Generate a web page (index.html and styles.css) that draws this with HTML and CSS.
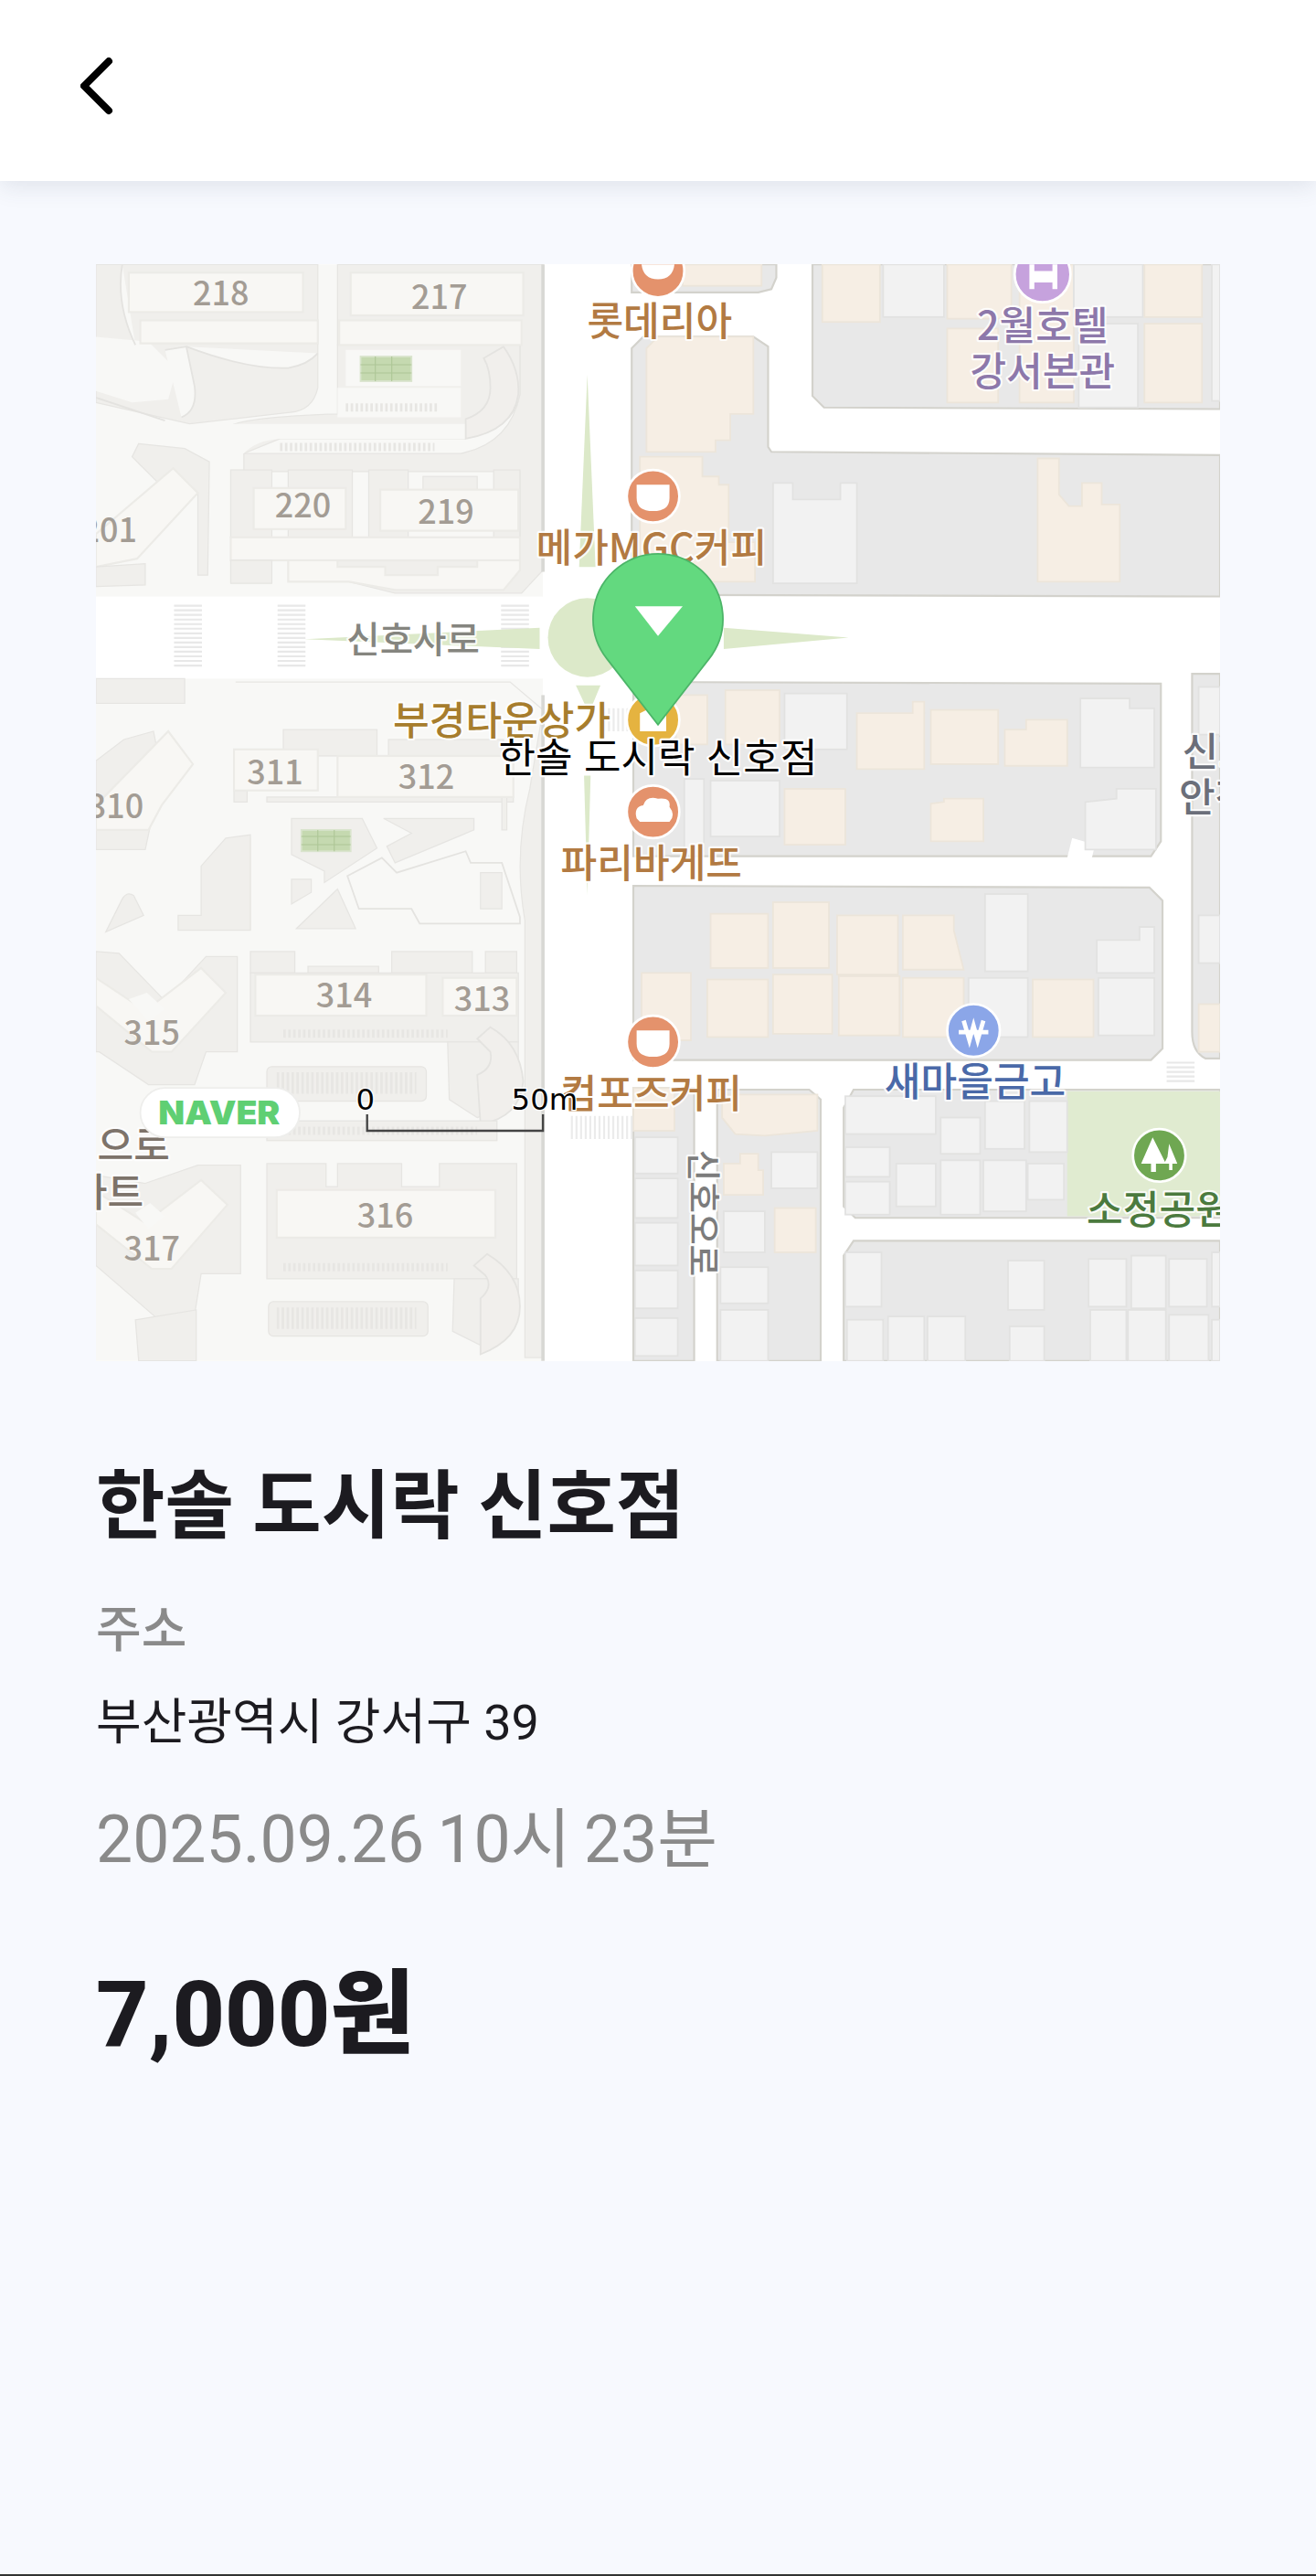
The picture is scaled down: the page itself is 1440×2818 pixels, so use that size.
FILE: index.html
```html
<!DOCTYPE html>
<html lang="ko">

<head>
    <meta charset="UTF-8">
    <meta name="viewport" content="width=device-width, initial-scale=1.0">
    <title>한솔 도시락 신호점</title>
    <link rel="stylesheet" href="styles.css">
</head>

<body>
    <div class="page">
        <header class="top">
            <svg class="back" viewBox="0 0 40 70" width="40" height="70">
                <path d="M31 8 L4 35 L31 62"></path>
            </svg>
        </header>
        <main class="content">
            <div class="map">
                <svg viewBox="58 161 684 667" width="1230" height="1200">
                    <!-- ground -->
                    <rect class="ground" x="58" y="161" width="272" height="667"></rect>
                    <rect class="road" x="58" y="363" width="684" height="50"></rect>

                    <!-- upper left complex -->
                    <path class="shade" d="M58 161H193V236Q190 250 176 251L115 258L58 245Z"></path>
                    <path class="ground" d="M58 205L90 208L107 225L102 243L80 245L58 238Z"></path>
                    <path class="walk" d="M100 213L113 211L118 235Q120 250 110 254M113 211Q150 225 175 224Q187 222 193 215M74 161Q70 185 82 210M58 242L100 256"></path>
                    <rect class="apt" x="78" y="166" width="106" height="24"></rect>
                    <rect class="apt" x="85" y="195" width="108" height="14"></rect>
                    <path class="shade" d="M205 161H330V347L317 361H240L212 354H175V341H205V327H316V287H148V276H280Q310 270 316 240V210H205Z"></path>
                    <path class="shade" d="M205 210H316V240Q312 262 282 267H170L148 276L135 262Q140 254 205 252Z"></path>
                    <path class="ground" d="M210 213H280V235H210Z"></path>
                    <path class="ground" d="M130 258H283V267H170Q155 268 148 276H130Z"></path>
                    <path class="ground" d="M205 236H280V254H205Z"></path>
                    <path class="stripe" d="M210 248H267M170 272H264"></path>
                    <path class="curve" d="M283 255Q298 250 298 236Q298 225 294 218L306 211Q316 225 315 240Q312 262 283 267Z"></path>
                    <rect class="court" x="219" y="217" width="31" height="15"></rect>
                    <path class="courtline" d="M219 222H250M219 227H250M228 217V232M238 217V232"></path>
                    <rect class="apt" x="213" y="166" width="105" height="26"></rect>
                    <rect class="apt" x="206" y="195" width="111" height="15"></rect>
                    <rect class="shade" x="140" y="286" width="25" height="41"></rect>
                    <rect class="shade" x="175" y="286" width="39" height="41"></rect>
                    <rect class="shade" x="224" y="286" width="24" height="41"></rect>
                    <rect class="shade" x="257" y="290" width="33" height="10"></rect>
                    <rect class="shade" x="300" y="286" width="16" height="41"></rect>
                    <rect class="apt" x="154" y="297" width="56" height="25"></rect>
                    <rect class="apt" x="231" y="298" width="84" height="25"></rect>
                    <rect class="apt" x="140" y="327" width="176" height="14"></rect>
                    <path class="apt" d="M175 341H205V345H234V350H266V345H290V341H316V347L306 359H240L212 354H175Z"></path>
                    <rect class="shade" x="140" y="341" width="25" height="14"></rect>
                    <path class="shade" d="M84 270L112 273L127 281L126 350H120V300L105 285L96 294L80 278Z"></path>
                    <path class="apt" d="M105 285L120 300L83 340L58 345V325Z"></path>
                    <path class="shade" d="M58 345L88 343V356L58 357Z"></path>

                    <!-- lower left complex -->
                    <path class="shade" d="M58 413H112V428H58Z"></path>
                    <path class="shade" d="M143 415H310L330 432V826H319V560Q312 520 322 480L330 432L310 415Z"></path>
                    <rect class="shade" x="172" y="444" width="57" height="16"></rect>
                    <rect class="shade" x="236" y="450" width="70" height="10"></rect>
                    <rect class="shade" x="142" y="481" width="8" height="7"></rect>
                    <rect class="shade" x="162" y="485" width="150" height="3"></rect>
                    <rect class="shade" x="305" y="485" width="3" height="20"></rect>
                    <rect class="apt" x="142" y="456" width="51" height="25"></rect>
                    <rect class="apt" x="205" y="460" width="107" height="25"></rect>
                    <path class="shade" d="M58 463L75 450L93 445L98 470L88 517H58Z"></path>
                    <path class="apt" d="M58 490L102 445L117 465L98 490L90 505H58Z"></path>
                    <path class="shade" d="M137 510L152 508V566H108V557H122V527Z"></path>
                    <path class="shade" d="M177 498H220L229 516L197 537V530L177 520Z"></path>
                    <path class="shade" d="M233 498H288V505L240 525L235 515L250 507Z"></path>
                    <rect class="court" x="183" y="505" width="30" height="13"></rect>
                    <path class="courtline" d="M183 509H213M183 514H213M193 505V518M203 505V518"></path>
                    <path class="shade" d="M177 535H189V543L177 550Z"></path>
                    <path class="shade" d="M180 565L205 541L216 565Z"></path>
                    <path class="shade" d="M64 567L74 547Q77 542 81 545L87 557Z"></path>
                    <path class="walk" d="M211 533L232 522L241 531L283 518L286 525H305L316 558V562H255L250 553H218Z"></path>
                    <rect class="shade" x="292" y="531" width="13" height="22"></rect>
                    <path class="shade" d="M152 579H179V592H152ZM238 579H287V592H238ZM295 579H314V592H295ZM187 588H230V592H187Z"></path>
                    <rect class="shade" x="152" y="592" width="163" height="42"></rect>
                    <rect class="apt" x="155" y="593" width="104" height="25"></rect>
                    <rect class="apt" x="269" y="595" width="45" height="23"></rect>
                    <path class="stripe" d="M172 629H272"></path>
                    <path class="shade" d="M272 634H315V660Q313 672 290 680L273 669Z"></path>
                    <path class="curve" d="M290 654Q300 650 298 640L290 632L298 625Q316 635 318 658Q316 680 292 684Z"></path>
                    <rect class="shade" x="162" y="649" width="97" height="21" rx="3"></rect>
                    <path class="stripe tall" d="M168 659H253"></path>
                    <rect class="shade" x="162" y="682" width="140" height="12"></rect>
                    <path class="stripe" d="M172 688H290"></path>
                    <path class="shade" d="M58 579L72 580L100 609L125 582H144V640H125L118 660H90L60 640H58Z"></path>
                    <path class="apt" d="M88 615L122 589L137 604L104 640H92L58 612V595Z"></path>
                    <path class="ground" d="M78 608L89 604L100 614L90 622Z"></path>
                    <path class="shade" d="M88 720L120 709H146V775H122L118 800L95 802L58 770V715Z"></path>
                    <path class="apt" d="M88 744L122 718L138 733L104 772H92L58 745V725Z"></path>
                    <path class="ground" d="M82 738L91 732L100 740L90 748Z"></path>
                    <path class="shade" d="M162 708H198V722H205V708H244V722H267V708H314V778H162Z"></path>
                    <rect class="apt" x="168" y="724" width="133" height="29"></rect>
                    <path class="stripe" d="M172 771H272"></path>
                    <path class="shade" d="M276 778H315V795Q313 812 295 820L275 810Z"></path>
                    <path class="curve" d="M292 790Q300 783 295 776L288 770L296 763Q316 775 316 795Q316 815 292 824Z"></path>
                    <rect class="shade" x="163" y="792" width="97" height="21" rx="3"></rect>
                    <path class="stripe tall" d="M168 802H253"></path>
                    <path class="shade" d="M82 803L119 797V828H84Z"></path>
                    <rect class="edge" x="329" y="161" width="2" height="187"></rect>
                    <rect class="edge" x="329" y="423" width="2" height="405"></rect>

                    <!-- blocks -->
                    <path class="blk" d="M384 161H472V169L469 176L461 178H384Z"></path>
                    <path class="blk" d="M384 212L391 205H458L467 211V272L469 275L742 277V363L384 362Z"></path>
                    <path class="blk" d="M494 161H742V249L501 248L494 241Z"></path>
                    <path class="blk" d="M385 415L706 416V512L700 521H385Z"></path>
                    <path class="blk" d="M385 539L699 540L707 548V638L700 645H385Z"></path>
                    <path class="blk" d="M725 410H742V644H733Q725 640 725 628Z"></path>
                    <path class="blk" d="M385 662H422V828H385Z"></path>
                    <path class="blk" d="M436 663H492L499 669V828H436Z"></path>
                    <path class="blk" d="M519 663H742V741H520L513 734V674Z"></path>
                    <path class="blk" d="M519 755H742V828H513V764Z"></path>
                    <rect class="park" x="649" y="664" width="93" height="76"></rect>
                    <path class="road" d="M649 522L652 510L666 514L664 522Z"></path>

                    <!-- buildings, top right -->
                    <rect class="bge" x="415" y="161" width="48" height="13"></rect>
                    <rect class="bge" x="500" y="161" width="35" height="35"></rect>
                    <rect class="gry" x="537" y="161" width="37" height="32"></rect>
                    <rect class="bge" x="576" y="161" width="39" height="33"></rect>
                    <rect class="bge" x="576" y="200" width="31" height="45"></rect>
                    <rect class="bge" x="620" y="161" width="33" height="84"></rect>
                    <rect class="gry" x="653" y="161" width="42" height="32"></rect>
                    <rect class="gry" x="656" y="197" width="36" height="51"></rect>
                    <rect class="bge" x="696" y="161" width="35" height="32"></rect>
                    <rect class="bge" x="696" y="197" width="35" height="48"></rect>
                    <rect class="gry" x="737" y="161" width="5" height="83"></rect>
                    <path class="bge" d="M393 212L400 205H458V252H444V268H435V275H393Z"></path>
                    <path class="bge" d="M389 278H427V290H437V295H443V330H459V354H389Z"></path>
                    <path class="gry" d="M470 294H482V304H511V294H521V355H470Z"></path>
                    <path class="bge" d="M631 279H644V301L650 308H658V294H670V307H681V354H631Z"></path>

                    <!-- buildings, middle -->
                    <rect class="bge" x="411" y="423" width="19" height="30"></rect>
                    <rect class="bge" x="441" y="420" width="33" height="33"></rect>
                    <rect class="gry" x="477" y="422" width="38" height="34"></rect>
                    <path class="bge" d="M521 434H555V427H562V468H521Z"></path>
                    <rect class="bge" x="566" y="432" width="41" height="33"></rect>
                    <path class="bge" d="M611 444H624V438H649V466H611Z"></path>
                    <path class="gry" d="M657 425H687V431H702V467H657Z"></path>
                    <rect class="gry" x="432" y="475" width="42" height="34"></rect>
                    <rect class="bge" x="477" y="480" width="37" height="34"></rect>
                    <path class="bge" d="M566 489L574 488V486H598V512H566Z"></path>
                    <path class="gry" d="M660 488L679 486V480H703V517H660Z"></path>
                    <rect class="gry" x="416" y="474" width="12" height="44"></rect>
                    <rect class="gry" x="729" y="418" width="13" height="29"></rect>

                    <rect class="bge" x="432" y="556" width="35" height="33"></rect>
                    <rect class="bge" x="470" y="549" width="34" height="40"></rect>
                    <rect class="bge" x="509" y="557" width="37" height="36"></rect>
                    <path class="bge" d="M549 557H580V566L586 590H549Z"></path>
                    <rect class="gry" x="599" y="544" width="26" height="47"></rect>
                    <path class="gry" d="M667 572H693V564H702V592H667Z"></path>
                    <rect class="bge" x="390" y="592" width="30" height="41"></rect>
                    <rect class="bge" x="430" y="596" width="37" height="35"></rect>
                    <rect class="bge" x="470" y="593" width="36" height="36"></rect>
                    <rect class="bge" x="510" y="594" width="37" height="36"></rect>
                    <rect class="bge" x="549" y="595" width="37" height="36"></rect>
                    <rect class="gry" x="589" y="595" width="36" height="36"></rect>
                    <rect class="bge" x="628" y="596" width="37" height="35"></rect>
                    <rect class="gry" x="668" y="595" width="34" height="35"></rect>
                    <rect class="gry" x="729" y="557" width="13" height="29"></rect>
                    <rect class="bge" x="729" y="611" width="13" height="29"></rect>

                    <!-- buildings, bottom -->
                    <rect class="bge" x="385" y="662" width="25" height="26"></rect>
                    <rect class="gry" x="386" y="692" width="26" height="22"></rect>
                    <rect class="gry" x="386" y="717" width="26" height="24"></rect>
                    <rect class="gry" x="386" y="744" width="26" height="26"></rect>
                    <rect class="gry" x="386" y="773" width="26" height="23"></rect>
                    <rect class="gry" x="386" y="802" width="26" height="23"></rect>
                    <path class="bge" d="M439 666H497V688L465 691L447 690L439 680Z"></path>
                    <path class="bge" d="M440 708H450V702H461V712H464V727H440Z"></path>
                    <rect class="gry" x="469" y="701" width="28" height="22"></rect>
                    <rect class="gry" x="440" y="737" width="25" height="25"></rect>
                    <rect class="bge" x="471" y="735" width="25" height="27"></rect>
                    <rect class="gry" x="438" y="771" width="29" height="22"></rect>

                    <rect class="gry" x="514" y="667" width="55" height="23"></rect>
                    <rect class="gry" x="572" y="680" width="24" height="22"></rect>
                    <rect class="gry" x="599" y="670" width="24" height="29"></rect>
                    <rect class="gry" x="626" y="670" width="23" height="31"></rect>
                    <rect class="gry" x="514" y="698" width="27" height="18"></rect>
                    <rect class="gry" x="514" y="719" width="27" height="20"></rect>
                    <rect class="gry" x="545" y="708" width="24" height="26"></rect>
                    <rect class="gry" x="572" y="706" width="24" height="33"></rect>
                    <rect class="gry" x="598" y="706" width="26" height="31"></rect>
                    <rect class="gry" x="625" y="708" width="22" height="22"></rect>
                    <rect class="gry" x="514" y="762" width="22" height="33"></rect>
                    <rect class="gry" x="613" y="767" width="22" height="30"></rect>
                    <rect class="gry" x="662" y="766" width="23" height="29"></rect>
                    <rect class="gry" x="688" y="764" width="21" height="32"></rect>
                    <rect class="gry" x="711" y="766" width="23" height="29"></rect>
                    <rect class="gry" x="737" y="762" width="5" height="33"></rect>
                    <rect class="gry" x="515" y="803" width="22" height="25"></rect>
                    <rect class="gry" x="540" y="801" width="22" height="27"></rect>
                    <rect class="gry" x="564" y="801" width="23" height="27"></rect>
                    <rect class="gry" x="614" y="807" width="21" height="21"></rect>
                    <rect class="gry" x="663" y="797" width="22" height="31"></rect>
                    <rect class="gry" x="686" y="797" width="23" height="31"></rect>
                    <rect class="gry" x="711" y="800" width="24" height="28"></rect>
                    <rect class="gry" x="737" y="803" width="5" height="25"></rect>
                    <rect class="gry" x="438" y="797" width="29" height="31"></rect>

                    <!-- crosswalks -->
                    <path class="cross" d="M114 368V406M177 368V406M313 368V406"></path>
                    <path class="cross" d="M718 646V660"></path>
                    <path class="cross-h" d="M347 686H385M364 438H384"></path>

                    <!-- median -->
                    <path class="median" d="M357 228L352 345H362Z"></path>
                    <path class="median" d="M350 417H365L358 434Z"></path>
                    <path class="median" d="M355 472H359L357 545Z"></path>
                    <path class="median" d="M185 389L328 382V395Z"></path>
                    <path class="median" d="M440 382L516 388L440 395Z"></path>
                    <circle class="median" cx="357" cy="388" r="24"></circle>

                    <!-- poi icons -->
                    <circle class="poi orange" cx="400" cy="165" r="16"></circle>
                    <path class="glyph" d="M390 161H410Q409 170 400 170Q391 170 390 161Z"></path>
                    <circle class="poi orange" cx="397" cy="302" r="16"></circle>
                    <path class="glyph" d="M387 295H407V303Q407 311 397 311Q387 311 387 303Z"></path>
                    <circle class="poi yellow" cx="397" cy="438" r="16"></circle>
                    <path class="glyph" d="M389 434L397 430L405 434V445H389Z"></path>
                    <circle class="poi orange" cx="397" cy="494" r="16"></circle>
                    <path class="glyph" d="M387 498Q385 491 391 490Q393 484 400 486Q408 485 407 491Q411 496 407 500H389Z"></path>
                    <circle class="poi orange" cx="397" cy="634" r="16"></circle>
                    <path class="glyph" d="M387 627H407V635Q407 643 397 643Q387 643 387 635Z"></path>
                    <circle class="poi blue" cx="592" cy="627" r="16"></circle>
                    <path class="won" d="M586 621L589.5 633L592 624L594.5 633L598 621M583 628H601"></path>
                    <circle class="poi parkpoi" cx="705" cy="703" r="16"></circle>
                    <path class="glyph" d="M701 692L709 708H703V713H700V708H694ZM711 696L716 708H713V712H711V708H708L710 704Z"></path>
                    <circle class="poi purple" cx="634" cy="167" r="17"></circle>
                    <path class="glyph" d="M626 161H629V165H640V161H643V176H640V172H629V176H626Z"></path>

                    <!-- labels -->
                    <text class="num" x="134" y="186">218</text>
                    <text class="num" x="267" y="188">217</text>
                    <text class="num" x="184" y="315">220</text>
                    <text class="num" x="271" y="319">219</text>
                    <text class="num end" x="83" y="330">201</text>
                    <text class="num" x="167" y="477">311</text>
                    <text class="num" x="259" y="480">312</text>
                    <text class="num end" x="87" y="498">310</text>
                    <text class="num" x="209" y="613">314</text>
                    <text class="num" x="293" y="615">313</text>
                    <text class="num" x="92" y="636">315</text>
                    <text class="num" x="234" y="747">316</text>
                    <text class="num" x="92" y="767">317</text>

                    <text class="lb food" x="401" y="204">롯데리아</text>
                    <text class="lb hotel" x="634" y="207">2월호텔</text>
                    <text class="lb hotel" x="634" y="235">강서본관</text>
                    <text class="lb food" x="396" y="342">메가MGC커피</text>
                    <text class="lb road-name" x="251" y="397">신호사로</text>
                    <text class="lb shop" x="305" y="447">부경타운상가</text>
                    <text class="lb food" x="396" y="534">파리바게뜨</text>
                    <text class="lb food" x="396" y="674">컴포즈커피</text>
                    <text class="lb bank" x="593" y="667">새마을금고</text>
                    <text class="lb parkname" x="705" y="745">소정공원</text>
                    <text class="lb other" x="741" y="466">신호</text>
                    <text class="lb other" x="739" y="494">안전</text>
                    <text class="lb apt-name end" x="103" y="706">신으로</text>
                    <text class="lb apt-name end" x="87" y="734">파트</text>
                    <text class="lb side-road" transform="translate(427 738) rotate(90)" x="0" y="7">신호오로</text>

                    <!-- pin -->
                    <path class="pin" d="M400 441L369 401A39.5 39.5 0 1 1 431 401Z"></path>
                    <path class="pin-arrow" d="M386 369H415L400 387Z"></path>
                    <text class="lb place" x="400" y="470">한솔 도시락 신호점</text>

                    <!-- naver logo, scale -->
                    <rect class="logo" x="85" y="662" width="97" height="30" rx="15"></rect>
                    <text class="logo-text" x="96" y="684" textLength="74" lengthAdjust="spacingAndGlyphs">NAVER</text>
                    <text class="scale" x="222" y="675">0</text>
                    <text class="scale" x="331" y="675">50m</text>
                    <path class="scale-line" d="M223 678V688H330V678"></path>
                </svg>
            </div>
            <h1 class="name">한솔 도시락 신호점</h1>
            <p class="label">주소</p>
            <p class="addr">부산광역시 강서구 39</p>
            <p class="date">2025.09.26 10시 23분</p>
            <p class="price">7,000원</p>
        </main>
    </div>
</body>

</html>
```

FILE: styles.css
```css
* {
    box-sizing: border-box;
}

body {
    margin: 0;
    background-color: #f7f9fe;
    font-family: Roboto, "Noto Sans CJK KR", sans-serif;
}

.page {
    display: flex;
    flex-direction: column;
    height: 2818px;
    border-bottom: 2px solid #333;
    overflow: hidden;
}

.top {
    display: flex;
    align-items: center;
    height: 198px;
    padding: 0 0 10px 88px;
    background-color: #fff;
    box-shadow: 0 6px 24px rgba(60, 70, 100, 0.12);
}

.back {
    display: block;
    fill: none;
    stroke: #000;
    stroke-width: 8;
    stroke-linecap: round;
    stroke-linejoin: round;
}

.content {
    padding: 91px 105px 0;
}

.map {
    width: 1230px;
    height: 1200px;
    overflow: hidden;
}

.map svg {
    display: block;
    background-color: #fff;
}

.name {
    margin: 109px 0 0;
    font-size: 82px;
    line-height: 100px;
    font-weight: 700;
    color: #1c1b20;
}

.label {
    margin: 51px 0 0;
    font-size: 54px;
    line-height: 70px;
    font-weight: 500;
    color: #8a8a8a;
}

.addr {
    margin: 31px 0 0;
    font-size: 54px;
    line-height: 70px;
    color: #1c1b20;
}

.date {
    margin: 51px 0 0;
    font-size: 71.5px;
    line-height: 84px;
    word-spacing: -3.5px;
    color: #8a8a8a;
}

.price {
    margin: 89px 0 0;
    font-size: 100px;
    line-height: 120px;
    font-weight: 800;
    color: #1c1b20;
}

/* map shapes */
.ground {
    fill: #f8f8f6;
}

.road {
    fill: #fff;
}

.shade {
    fill: #f0efec;
    stroke: #e6e5e2;
    stroke-width: 0.7;
}

.apt {
    fill: #f8f7f4;
    stroke: #ecebe7;
    stroke-width: 1.2;
}

.walk {
    fill: #f8f8f6;
    stroke: #e4e3e0;
    stroke-width: 1;
}

.curve {
    fill: #f1efec;
    stroke: #e4e3e0;
    stroke-width: 1;
}

.stripe {
    fill: none;
    stroke: #e7e6e3;
    stroke-width: 5;
    stroke-dasharray: 1.5 1.5;
}

.stripe.tall {
    stroke-width: 13;
}

.court {
    fill: #c5d9b0;
    stroke: #d9e4cd;
}

.courtline {
    fill: none;
    stroke: #adc696;
    stroke-width: 0.6;
}

.edge {
    fill: #d8d8d4;
}

.blk {
    fill: #e8e8e8;
    stroke: #d3d2cc;
    stroke-width: 1.2;
}

.park {
    fill: #e0ebd0;
}

.bge {
    fill: #f6eee4;
    stroke: #ece5da;
    stroke-width: 1;
}

.gry {
    fill: #f2f2f2;
    stroke: #e2e2e1;
    stroke-width: 1;
}

.cross {
    fill: none;
    stroke: #e8e8e8;
    stroke-width: 17;
    stroke-dasharray: 1.2 1.6;
}

.cross-h {
    fill: none;
    stroke: #ebebeb;
    stroke-width: 14;
    stroke-dasharray: 1.2 1.6;
}

.median {
    fill: #dce9c9;
}

.poi {
    stroke: #fff;
    stroke-width: 1.5;
}

.orange {
    fill: #e4926c;
}

.yellow {
    fill: #e5b340;
}

.blue {
    fill: #8ba6e8;
}

.parkpoi {
    fill: #6fa752;
}

.purple {
    fill: #c6a2dd;
}

.glyph {
    fill: #fff;
}

.won {
    fill: none;
    stroke: #fff;
    stroke-width: 2.6;
}

.num,
.lb {
    font-family: "Noto Sans CJK KR", sans-serif;
    font-weight: 500;
    text-anchor: middle;
    paint-order: stroke;
    stroke: rgba(255, 255, 255, 0.85);
    stroke-linejoin: round;
}

.num {
    font-size: 20px;
    fill: #a39c94;
    stroke-width: 0;
}

.lb {
    font-size: 24px;
    stroke-width: 2.4;
}

.num.end,
.lb.end {
    text-anchor: end;
}

.food {
    fill: #b27a42;
}

.hotel {
    fill: #8d78aa;
}

.road-name {
    font-size: 22px;
    fill: #85857f;
}

.shop {
    fill: #a77d2d;
}

.bank {
    fill: #4a69a8;
}

.parkname {
    fill: #4b7a3e;
}

.other {
    fill: #6b6f7a;
}

.apt-name {
    fill: #7d736a;
}

.side-road {
    font-size: 21px;
    fill: #7c7c7c;
}

.place {
    font-size: 24.5px;
    font-weight: 400;
    fill: #000;
    stroke: #fff;
}

.pin {
    fill: #63d97f;
    stroke: #4cb568;
    stroke-width: 1;
}

.pin-arrow {
    fill: #fff;
}

.logo {
    fill: #fff;
    stroke: #eeeeec;
    stroke-width: 1;
}

.logo-text {
    font-family: Inter, sans-serif;
    font-size: 20px;
    font-weight: 900;
    fill: #5fcf73;
}

.scale {
    font-family: "DejaVu Sans", sans-serif;
    font-size: 18px;
    text-anchor: middle;
    fill: #000;
    paint-order: stroke;
    stroke: #fff;
    stroke-width: 1.5;
}

.scale-line {
    fill: none;
    stroke: #444;
    stroke-width: 1.3;
}
```
